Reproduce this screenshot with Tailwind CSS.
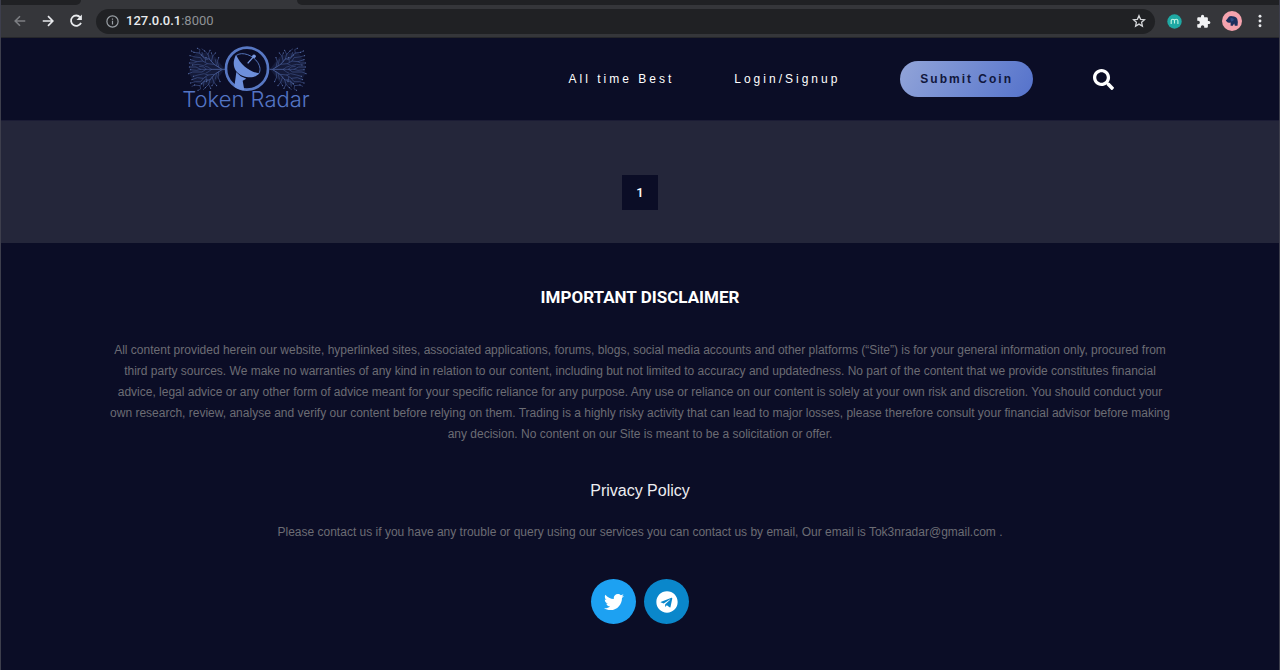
<!DOCTYPE html>
<html lang="en">
<head>
<meta charset="utf-8">
<meta name="viewport" content="width=device-width, initial-scale=1">
<title>Token Radar</title>
<script src="https://cdn.jsdelivr.net/npm/@tailwindcss/browser@4"></script>
</head>
<body class="flex min-h-screen flex-col border-x border-[#3d3e4c] bg-[#0b0d26] font-['Liberation_Sans',Arial,sans-serif] text-white">

<!-- Browser chrome -->
<div class="bg-[#35363a]">
  <div class="flex h-[5px] justify-between">
    <div class="w-20 rounded-br-md bg-[#202124]"></div>
    <div class="ml-[216px] grow rounded-bl-md bg-[#202124]"></div>
  </div>
  <div class="flex h-[33px] items-center border-b border-[#26272b] pr-[14px] pl-[9px]">
    <button aria-label="Back" class="mr-2 flex size-5 items-center justify-center text-[#7d7f83]">
      <svg class="size-[14px]" viewBox="0 0 16 16" fill="none" stroke="currentColor" stroke-width="1.8"><path d="M14 8H3M8 2.500L2.500 8L8 13.500"/></svg>
    </button>
    <button aria-label="Forward" class="mr-2 flex size-5 items-center justify-center text-[#e8eaed]">
      <svg class="size-[14px]" viewBox="0 0 16 16" fill="none" stroke="currentColor" stroke-width="1.9"><path d="M2 8H13M8 2.500L13.500 8L8 13.500"/></svg>
    </button>
    <button aria-label="Reload" class="mr-[10px] flex size-5 items-center justify-center text-[#e8eaed]">
      <svg class="size-4" viewBox="0 0 16 16"><path d="M12.200 4.300A5.200 5.200 0 1 0 13 9.800" fill="none" stroke="currentColor" stroke-width="1.800"/><path d="M13.900 1.600V7H8.500Z" fill="currentColor"/></svg>
    </button>
    <div class="flex h-[25px] grow items-center rounded-full bg-[#202124] pr-[9px] pl-[10px]">
      <svg class="mr-[7px] size-[13px] shrink-0" viewBox="0 0 13 13" fill="none" stroke="#9aa0a6" stroke-width="1.200"><circle cx="6.500" cy="6.500" r="5.600"/><path d="M6.500 5.800V9.600M6.500 3.400V4.700"/></svg>
      <span class="grow font-['Roboto',sans-serif] text-[13px] text-[#8e9196]"><span class="font-medium text-[#e8eaed]">127.0.0.1</span>:8000</span>
      <button aria-label="Bookmark this page"><svg class="size-[14px]" viewBox="0 0 14 14" fill="none" stroke="#d5d7da" stroke-width="1.300" stroke-linejoin="miter"><path d="M7 1.700L8.600 5.300L12.500 5.700L9.600 8.300L10.400 12.100L7 10.100L3.600 12.100L4.400 8.300L1.500 5.700L5.400 5.300Z"/></svg></button>
    </div>
    <div class="flex items-center pl-3">
      <button aria-label="Extension" class="mr-[14px]"><svg class="size-[15px]" viewBox="0 0 15 15"><circle cx="7.500" cy="7.500" r="7.200" fill="#1fa9a4"/><path d="M4.200 10V6.600Q4.300 5.300 5.800 5.300Q7.400 5.300 7.500 6.800V9.600M7.500 6.800Q7.600 5.300 9.200 5.300Q10.800 5.300 10.900 6.800V10" fill="none" stroke="#c4f5e4" stroke-width="1.100"/></svg></button>
      <button aria-label="Extensions" class="mr-[11px]"><svg class="size-[15px]" viewBox="0 0 24 24" fill="#f1f2f4"><path d="M20.500 11H19V7c0-1.100-.9-2-2-2h-4V3.500a2.500 2.500 0 0 0-5 0V5H4c-1.100 0-2 .9-2 2v3.800h1.500a2.700 2.700 0 0 1 0 5.400H2V20c0 1.100.9 2 2 2h3.800v-1.500a2.700 2.700 0 0 1 5.400 0V22H17c1.100 0 2-.9 2-2v-4h1.500a2.500 2.500 0 0 0 0-5z"/></svg></button>
      <button aria-label="Profile" class="mr-[13px]"><svg class="size-5" viewBox="0 0 20 20"><circle cx="10" cy="10" r="10" fill="#f5a3ae"/><path d="M3.800 9.200Q5 8.600 5.700 7.200Q7 4.700 10 5.200Q13.800 5 15.300 8Q16.300 10.500 15.500 14.700H12.800L12.200 12.500L10.800 14.700H8.600V11.600Q6 12.200 4.800 10.800Z" fill="#1c2f5c"/><path d="M8.300 7.200Q11 6.200 12 8.600Q11.200 11 9 10.200Z" fill="#2d4a82"/></svg></button>
      <button aria-label="Menu"><svg class="h-[14px] w-[10px]" viewBox="0 0 10 14" fill="#e8eaed"><circle cx="5" cy="2.200" r="1.450"/><circle cx="5" cy="7" r="1.450"/><circle cx="5" cy="11.800" r="1.450"/></svg></button>
    </div>
  </div>
</div>

<header class="border-b border-[#1b1c35]">
  <div class="mx-auto flex h-[82px] w-full max-w-[948px] items-center justify-between pl-4">
    <a href="#" class="flex flex-col items-center text-[#5475c4]">
      <svg class="h-[46px] w-32" viewBox="40 26 384 138" fill="none">
        <defs>
          <g id="circuit" stroke="#43568f" stroke-linecap="round">
            <path fill="#3b4c85" fill-opacity=".22" stroke="none" d="M168 99L140 62L112 50L84 48L64 76L62 112L76 138L108 148L140 136Z"/>
            <path stroke-width="3" d="M168 99H128M160 99L136 84L122 68M160 100L138 114L124 130"/>
            <path stroke-width="2" d="M128 99H96L82 92H62M112 99L100 107H72L60 112M136 84L116 82L102 74L84 76L66 70M122 68L118 54L108 44M122 68L104 62L92 50L76 48M118 54L124 42M128 76L132 60L140 50M138 114L118 116L104 126L86 124L70 130M124 130L120 144L110 154M124 130L106 136L94 148L78 146M120 144L126 156M130 122L136 138L144 148M150 92L146 76L150 64M150 106L148 122L154 136"/>
            <path stroke-width="1.700" d="M116 82L104 88L88 84L72 86M102 74L96 64L80 62L64 58M92 50L94 40L86 36M104 62L100 48M96 99L84 102L66 100M118 116L106 112L88 116L74 120M104 126L96 136L80 136L66 140M94 148L96 158L88 162M106 136L104 150M112 99L106 92L92 90M128 99L118 92L110 90M128 100L118 107L112 110M84 76L76 80L62 80M132 60L128 50M136 138L130 148M108 44L100 38M110 154L104 160M76 48L68 44M78 146L70 150M118 70L108 68L98 56M118 130L110 130L98 142M110 76L112 64M112 122L114 136M144 88L140 70M144 110L140 128"/>
            <path stroke="#6079b5" stroke-width="3" d="M62 92h.1M60 112h.1M66 70h.1M108 44h.1M76 48h.1M124 42h.1M140 50h.1M70 130h.1M110 154h.1M78 146h.1M126 156h.1M144 148h.1M150 64h.1M154 136h.1M72 86h.1M64 58h.1M86 36h.1M66 100h.1M74 120h.1M66 140h.1M88 162h.1M62 80h.1M128 50h.1M130 148h.1M68 44h.1M98 56h.1M98 142h.1M112 64h.1M114 136h.1"/>
          </g>
        </defs>
        <use href="#circuit"/>
        <use href="#circuit" transform="matrix(-1 0 0 1 472 0)"/>
        <circle cx="235" cy="97" r="63" fill="#0b0d26" stroke="#5878c4" stroke-width="8"/>
        <path fill="#6d8fdc" d="M202 55C188 82 196 108 221 118C243 127 263 123 272 111C246 108 216 87 202 55Z"/>
        <path fill="#6d8fdc" d="M203 107C214 121 226 124 233 127L222 133L227 161C215 162 204 157 197 151Z"/>
        <path stroke="#5473b8" stroke-width="3" d="M203 57C222 44 254 58 267 78C275 91 276 102 271 111"/>
        <path stroke="#7b9be4" stroke-width="4" d="M237 81L253 63"/>
        <circle cx="256" cy="60" r="5.500" fill="#7b9be4"/>
      </svg>
      <span class="-mt-[2px] pb-1 font-['Inter',sans-serif] text-[22px] leading-5 font-light">Token Radar</span>
    </a>
    <nav class="flex items-center gap-[60px] text-[12px] tracking-[3px]">
      <a href="#">All time Best</a>
      <a href="#">Login/Signup</a>
      <button class="h-9 rounded-full bg-linear-120 from-[#92a4d8] to-[#5572cb] px-5 text-[12px] font-bold tracking-[2px] text-[#11173d]">Submit Coin</button>
      <button aria-label="Search"><svg class="size-[21px]" viewBox="0 0 512 512" fill="#fff"><path d="M505 442.700L405.300 343c-4.500-4.500-10.600-7-17-7H372c27.600-35.300 44-79.700 44-128C416 93.100 322.900 0 208 0S0 93.100 0 208s93.100 208 208 208c48.300 0 92.700-16.400 128-44v16.300c0 6.400 2.500 12.500 7 17l99.700 99.700c9.400 9.400 24.600 9.400 33.900 0l28.300-28.300c9.400-9.400 9.400-24.600.1-34zM208 336c-70.700 0-128-57.200-128-128 0-70.700 57.200-128 128-128 70.700 0 128 57.200 128 128 0 70.700-57.200 128-128 128z"/></svg></button>
    </nav>
  </div>
</header>

<main class="flex justify-center bg-[#24263a] pt-[54px] pb-[33px]">
  <a href="#" aria-current="page" class="flex h-[35px] w-9 items-center justify-center bg-[#0b0d26] font-['Roboto',sans-serif] text-[13px] font-medium">1</a>
</main>

<footer class="mx-auto max-w-[1108px] grow px-5 pt-11 text-center text-[12px] leading-5 text-[#6b6c74]">
  <h2 class="font-['Roboto',sans-serif] text-[17px] font-bold text-white">IMPORTANT DISCLAIMER</h2>
  <p class="mt-[33px] leading-[21px]">All content provided herein our website, hyperlinked sites, associated applications, forums, blogs, social media accounts and other platforms (“Site”) is for your general information only, procured from third party sources. We make no warranties of any kind in relation to our content, including but not limited to accuracy and updatedness. No part of the content that we provide constitutes financial advice, legal advice or any other form of advice meant for your specific reliance for any purpose. Any use or reliance on our content is solely at your own risk and discretion. You should conduct your own research, review, analyse and verify our content before relying on them. Trading is a highly risky activity that can lead to major losses, please therefore consult your financial advisor before making any decision. No content on our Site is meant to be a solicitation or offer.</p>
  <a href="#" class="mt-9 inline-block text-[16px] text-[#eeeef2]">Privacy Policy</a>
  <p class="mt-5">Please contact us if you have any trouble or query using our services you can contact us by email, Our email is Tok3nradar@gmail.com .</p>
  <div class="mt-[37px] flex justify-center gap-2">
    <a href="#" aria-label="Twitter" class="flex size-[45px] items-center justify-center rounded-full bg-[#1da1f2]"><svg class="size-5" viewBox="0 0 512 512" fill="#fff"><path d="M459.370 151.716c.325 4.548.325 9.097.325 13.645 0 138.720-105.583 298.558-298.558 298.558-59.452 0-114.680-17.219-161.137-47.106 8.447.974 16.568 1.299 25.340 1.299 49.055 0 94.213-16.568 130.274-44.832-46.132-.975-84.792-31.188-98.112-72.772 6.498.974 12.995 1.624 19.818 1.624 9.421 0 18.843-1.300 27.614-3.573-48.081-9.747-84.143-51.980-84.143-102.985v-1.299c13.969 7.797 30.214 12.670 47.431 13.319-28.264-18.843-46.781-51.005-46.781-87.391 0-19.492 5.197-37.360 14.294-52.954 51.655 63.675 129.300 105.258 216.365 109.807-1.624-7.797-2.599-15.918-2.599-24.040 0-57.828 46.782-104.934 104.934-104.934 30.213 0 57.502 12.670 76.670 33.137 23.715-4.548 46.456-13.320 66.599-25.340-7.798 24.366-24.366 44.833-46.132 57.827 21.117-2.273 41.584-8.122 60.426-16.243-14.292 20.791-32.161 39.308-52.628 54.253z"/></svg></a>
    <a href="#" aria-label="Telegram" class="flex size-[45px] items-center justify-center rounded-full bg-[#0a87cb]"><svg class="size-[22px]" viewBox="0 0 496 512" fill="#fff"><path d="M248 8C111 8 0 119 0 256s111 248 248 248 248-111 248-248S385 8 248 8zm121.800 169.900l-40.700 191.800c-3 13.600-11.100 16.900-22.400 10.500l-62-45.700-29.900 28.800c-3.300 3.300-6.100 6.100-12.500 6.100l4.400-63.100 114.900-103.800c5-4.400-1.100-6.900-7.700-2.500l-142 89.400-61.200-19.100c-13.300-4.200-13.600-13.300 2.800-19.700l239.100-92.200c11.100-4 20.800 2.700 17.200 19.500z"/></svg></a>
  </div>
</footer>
</body>
</html>
